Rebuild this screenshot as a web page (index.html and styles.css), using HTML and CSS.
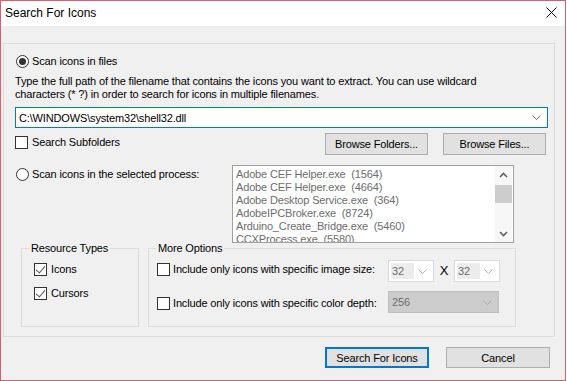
FILE: index.html
```html
<!DOCTYPE html>
<html lang="en">

<head>
    <meta charset="UTF-8">
    <meta name="viewport" content="width=device-width, initial-scale=1.0">
    <title>Search For Icons</title>
    <link rel="stylesheet" href="styles.css">
</head>

<body>
    <div class="window">
        <div class="titlebar">
            <span class="title">Search For Icons</span>
            <svg class="close" width="11" height="11" viewBox="0 0 11 11">
                <path d="M0.5 0.5 L10.5 10.5 M10.5 0.5 L0.5 10.5" stroke="#000" stroke-width="1" fill="none" />
            </svg>
        </div>

        <div class="frame">
            <label class="radio-row first"><span class="radio checked"></span>Scan icons in files</label>
            <p class="hint">Type the full path of the filename that contains the icons you want to extract. You can use wildcard<br>characters (* ?) in order to search for icons in multiple filenames.</p>

            <div class="combo path">
                <span class="combo-text">C:\WINDOWS\system32\shell32.dll</span>
                <svg class="chevron" width="9" height="5" viewBox="0 0 9 5">
                    <path d="M0.5 0.5 L4.5 4.5 L8.5 0.5" stroke="#6d6d6d" fill="none" />
                </svg>
            </div>

            <div class="browse-row">
                <label class="check-row"><span class="checkbox"></span>Search Subfolders</label>
                <div class="browse-buttons">
                    <button class="btn">Browse Folders...</button>
                    <button class="btn">Browse Files...</button>
                </div>
            </div>

            <div class="process-row">
                <label class="radio-row"><span class="radio"></span>Scan icons in the selected process:</label>
                <div class="listbox">
                    <ul class="items">
                        <li>Adobe CEF Helper.exe  (1564)</li>
                        <li>Adobe CEF Helper.exe  (4664)</li>
                        <li>Adobe Desktop Service.exe  (364)</li>
                        <li>AdobeIPCBroker.exe  (8724)</li>
                        <li>Arduino_Create_Bridge.exe  (5460)</li>
                        <li>CCXProcess.exe  (5580)</li>
                    </ul>
                    <div class="scrollbar">
                        <svg class="arrow" width="9" height="6" viewBox="0 0 9 6">
                            <path d="M1 5 L4.5 1.5 L8 5" stroke="#606060" stroke-width="1.6" fill="none" />
                        </svg>
                        <div class="thumb"></div>
                        <svg class="arrow down" width="9" height="6" viewBox="0 0 9 6">
                            <path d="M1 1 L4.5 4.5 L8 1" stroke="#606060" stroke-width="1.6" fill="none" />
                        </svg>
                    </div>
                </div>
            </div>

            <div class="groups">
                <fieldset class="group resource">
                    <legend>Resource Types</legend>
                    <label class="check-row"><span class="checkbox checked"></span>Icons</label>
                    <label class="check-row"><span class="checkbox checked"></span>Cursors</label>
                </fieldset>
                <fieldset class="group options">
                    <legend>More Options</legend>
                    <div class="option-row">
                        <label class="check-row"><span class="checkbox"></span>Include only icons with specific image size:</label>
                        <div class="combo small"><span class="sel">32</span>
                            <svg class="chevron" width="9" height="5" viewBox="0 0 9 5">
                                <path d="M0.5 0.5 L4.5 4.5 L8.5 0.5" stroke="#b4b4b4" fill="none" />
                            </svg>
                        </div>
                        <span class="times">X</span>
                        <div class="combo small"><span class="sel">32</span>
                            <svg class="chevron" width="9" height="5" viewBox="0 0 9 5">
                                <path d="M0.5 0.5 L4.5 4.5 L8.5 0.5" stroke="#b4b4b4" fill="none" />
                            </svg>
                        </div>
                    </div>
                    <div class="option-row second">
                        <label class="check-row"><span class="checkbox"></span>Include only icons with specific color depth:</label>
                        <div class="combo depth"><span class="combo-text">256</span>
                            <svg class="chevron" width="9" height="5" viewBox="0 0 9 5">
                                <path d="M0.5 0.5 L4.5 4.5 L8.5 0.5" stroke="#a8a8a8" fill="none" />
                            </svg>
                        </div>
                    </div>
                </fieldset>
            </div>
        </div>

        <div class="actions">
            <button class="btn primary">Search For Icons</button>
            <button class="btn">Cancel</button>
        </div>
    </div>
</body>

</html>
```

FILE: styles.css
```css
* {
    margin: 0;
    padding: 0;
    box-sizing: border-box;
}

body {
    background-color: #fff;
    font-family: "Liberation Sans", Arial, sans-serif;
    font-size: 11px;
    letter-spacing: -0.15px;
    color: #000;
}

.window {
    width: 566px;
    height: 381px;
    border: 1px solid #d0646e;
    background-color: #f0f0f0;
    display: flex;
    flex-direction: column;
}

.titlebar {
    height: 25px;
    background-color: #fff;
    display: flex;
    align-items: center;
    justify-content: space-between;
    padding: 0 8px 0 4px;
}

.title {
    font-size: 12px;
    letter-spacing: 0;
    margin-top: -2px;
}

.close {
    display: block;
    margin-top: -2px;
}

.frame {
    margin: 17px 0 0 2px;
    width: 552px;
    height: 294px;
    border: 1px solid #dcdcdc;
    padding: 0 6px 0 11px;
}

.radio-row,
.check-row {
    display: flex;
    align-items: center;
    height: 13px;
    line-height: 13px;
    white-space: nowrap;
}

.radio-row.first {
    margin-top: 11px;
    margin-left: 1px;
}

.radio {
    width: 13px;
    height: 13px;
    border: 1px solid #333;
    border-radius: 50%;
    background-color: #fff;
    margin-right: 3px;
    display: flex;
    align-items: center;
    justify-content: center;
    flex-shrink: 0;
}

.radio.checked::after {
    content: "";
    width: 7px;
    height: 7px;
    border-radius: 50%;
    background-color: #333;
}

.checkbox {
    width: 13px;
    height: 13px;
    border: 1px solid #333;
    background-color: #fff;
    margin-right: 4px;
    flex-shrink: 0;
    position: relative;
}

.checkbox.checked::after {
    content: "";
    position: absolute;
    left: 3px;
    top: 0px;
    width: 4px;
    height: 8px;
    border-right: 1.5px solid #555;
    border-bottom: 1.5px solid #555;
    transform: rotate(40deg);
}

.hint {
    margin-top: 7px;
    line-height: 13px;
}

.combo {
    display: flex;
    align-items: center;
    justify-content: space-between;
    background-color: #fff;
    border: 1px solid #d9d9d9;
}

.combo .chevron {
    display: block;
}

.combo.path {
    margin-top: 6px;
    height: 21px;
    border-color: #0078d7;
    padding: 0 6px 0 3px;
}

.browse-row {
    margin-top: 5px;
    display: flex;
    justify-content: space-between;
    align-items: flex-start;
}

.browse-row .check-row {
    margin-top: 3px;
}

.browse-buttons {
    display: flex;
    gap: 15px;
    margin-right: 2px;
}

.btn {
    font-family: "Liberation Sans", Arial, sans-serif;
    font-size: 11px;
    letter-spacing: -0.15px;
    color: #000;
    width: 103px;
    height: 22px;
    background-color: #e1e1e1;
    border: 1px solid #adadad;
}

.process-row {
    margin-top: 10px;
    display: flex;
    align-items: flex-start;
}

.process-row .radio-row {
    width: 217px;
    margin-top: 3px;
    margin-left: 1px;
}

.listbox {
    margin-left: -1px;
    width: 282px;
    height: 78px;
    border: 1px solid #a0a0a0;
    background-color: #fff;
    display: flex;
    justify-content: space-between;
    overflow: hidden;
}

.items {
    list-style: none;
    padding: 2px 0 0 3px;
    color: #6d6d6d;
}

.items li {
    height: 13px;
    line-height: 13px;
    white-space: pre;
}

.scrollbar {
    width: 17px;
    margin-right: 1px;
    background-color: #f7f7f7;
    display: flex;
    flex-direction: column;
    align-items: center;
}

.scrollbar .arrow {
    display: block;
    margin-top: 6px;
}

.thumb {
    width: 17px;
    height: 18px;
    margin-top: 7px;
    background-color: #cdcdcd;
}

.scrollbar .arrow.down {
    margin-top: auto;
    margin-bottom: 5px;
}

.groups {
    display: flex;
    gap: 9px;
    margin-left: 6px;
}

.group {
    border: 1px solid #dcdcdc;
    height: 84px;
    padding: 0;
}

.group legend {
    margin-left: 7px;
    padding: 0 2px;
    line-height: 11px;
}

.resource {
    width: 118px;
}

.resource .check-row {
    margin: 9px 0 0 12px;
}

.resource .check-row + .check-row {
    margin-top: 11px;
}

.options {
    width: 368px;
}

.option-row {
    display: flex;
    align-items: flex-start;
    margin: 6px 0 0 8px;
}

.option-row.second {
    margin-top: 9px;
}

.option-row .check-row {
    width: 231px;
    margin-top: 3px;
}

.option-row.second .check-row {
    margin-top: 6px;
}

.option-row .checkbox {
    margin-right: 3px;
}

.combo.small {
    width: 46px;
    height: 22px;
    padding: 0 6px 0 2px;
    color: #6d6d6d;
}

.combo .sel {
    background-color: #ececec;
    width: 23px;
    height: 16px;
    line-height: 16px;
    padding-left: 1px;
}

.times {
    width: 20px;
    text-align: center;
    font-size: 13px;
    line-height: 22px;
}

.combo.depth {
    width: 111px;
    height: 22px;
    background-color: #cccccc;
    border-color: #bfbfbf;
    color: #6d6d6d;
    padding: 0 6px 0 3px;
}

.actions {
    margin-top: 10px;
    display: flex;
    justify-content: flex-end;
    gap: 17px;
    padding-right: 15px;
}

.actions .btn {
    width: 104px;
    height: 21px;
}

.actions .btn.primary {
    border: 2px solid #0078d7;
}
```
